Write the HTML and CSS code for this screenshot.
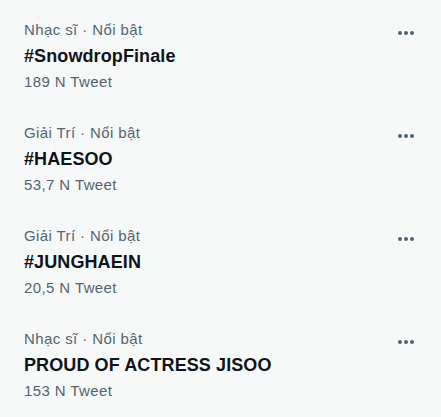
FILE: index.html
```html
<!DOCTYPE html>
<html>
<head>
<link rel="stylesheet" href="styles.css">
</head>
<body>

<div class="trends">
  <div class="trend">
    <div class="trend-text">
      <div class="meta">Nhạc sĩ · Nổi bật</div>
      <div class="title">#SnowdropFinale</div>
      <div class="count">189 N Tweet</div>
    </div>
    <div class="more"><span></span><span></span><span></span></div>
  </div>
  <div class="trend">
    <div class="trend-text">
      <div class="meta">Giải Trí · Nổi bật</div>
      <div class="title">#HAESOO</div>
      <div class="count">53,7 N Tweet</div>
    </div>
    <div class="more"><span></span><span></span><span></span></div>
  </div>
  <div class="trend">
    <div class="trend-text">
      <div class="meta">Giải Trí · Nổi bật</div>
      <div class="title">#JUNGHAEIN</div>
      <div class="count">20,5 N Tweet</div>
    </div>
    <div class="more"><span></span><span></span><span></span></div>
  </div>
  <div class="trend">
    <div class="trend-text">
      <div class="meta">Nhạc sĩ · Nổi bật</div>
      <div class="title">PROUD OF ACTRESS JISOO</div>
      <div class="count">153 N Tweet</div>
    </div>
    <div class="more"><span></span><span></span><span></span></div>
  </div>
</div>

</body>
</html>
```

FILE: styles.css
```css
body {
    margin: 0;
    background-color: #f7f9f9;
    font-family: "Liberation Sans", Arial, sans-serif;
}

.trends {
    width: 441px;
}

.trend {
    display: flex;
    justify-content: space-between;
    padding: 17px 27px 8px 24px;
    height: 78px;
}

.meta, .count {
    font-size: 15px;
    line-height: 26px;
    letter-spacing: 0.4px;
    color: #536471;
}

.title {
    font-size: 18px;
    line-height: 26px;
    letter-spacing: 0.1px;
    font-weight: bold;
    color: #0f1419;
}

.more {
    display: flex;
    gap: 2px;
    padding-top: 14px;
    height: 4px;
}

.more span {
    width: 4px;
    height: 4px;
    border-radius: 50%;
    background-color: #536471;
}
```
